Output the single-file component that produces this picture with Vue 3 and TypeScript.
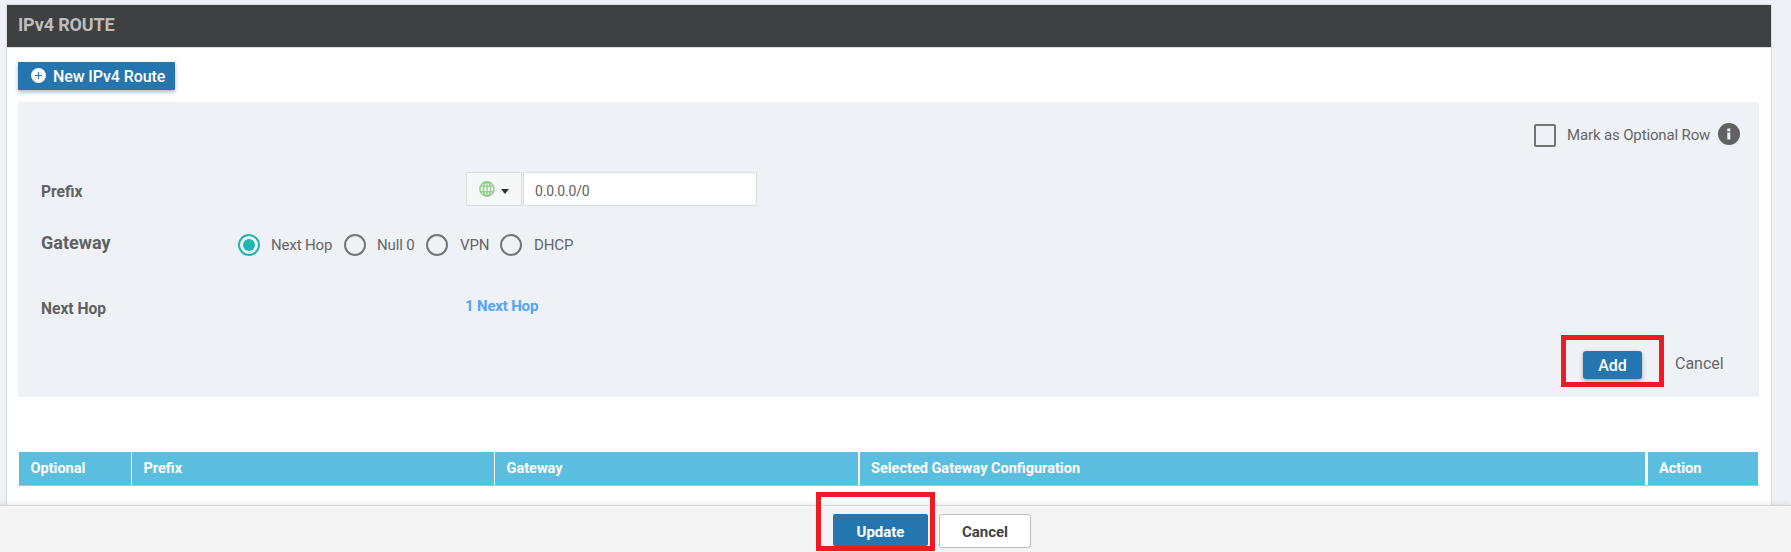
<script setup lang="ts">
import { ref } from 'vue'

interface GatewayOption {
  id: string
  label: string
}

const gateways: GatewayOption[] = [
  { id: 'hop', label: 'Next Hop' },
  { id: 'null', label: 'Null 0' },
  { id: 'vpn', label: 'VPN' },
  { id: 'dhcp', label: 'DHCP' },
]
const selected = ref('hop')
const optional = ref(false)
const prefix = ref('0.0.0.0/0')
const columns: string[] = ['Optional', 'Prefix', 'Gateway', 'Selected Gateway Configuration', 'Action']
</script>

<template>
  <div class="page">
    <section class="panel">
      <header class="panel-head"><h1>IPv4 ROUTE</h1></header>
      <div class="panel-body">
        <button class="btn new-route">
          <svg class="plus" viewBox="0 0 15 15">
            <circle cx="7.5" cy="7.5" r="7.4" fill="#fff" />
            <path d="M7.5 4v7M4 7.5h7" stroke="#2576ae" stroke-width="1.1" />
          </svg>
          <span>New IPv4 Route</span>
        </button>

        <div class="form">
          <div class="optional-row">
            <span class="check" :class="{ on: optional }" @click="optional = !optional"></span>
            <span class="optional-label">Mark as Optional Row</span>
            <svg class="info" viewBox="0 0 22 22">
              <circle cx="11" cy="11" r="11" fill="#616161" />
              <path d="M9.3 5.5h3v2.7h-3zM9.3 9.6h3v7h-3z" fill="#eef1f6" />
            </svg>
          </div>

          <div class="row prefix-row">
            <label class="name">Prefix</label>
            <button class="picker">
              <svg class="globe" viewBox="0 0 16 16" fill="none" stroke="#93d08b" stroke-width="1.6">
                <circle cx="8" cy="8" r="7.1" />
                <ellipse cx="8" cy="8" rx="3.6" ry="7.1" />
                <path d="M8 1v14M1.6 5.3h12.8M1.6 10.7h12.8" stroke-width="1.4" />
              </svg>
              <span class="caret"></span>
            </button>
            <input v-model="prefix" class="field" type="text" />
          </div>

          <div class="row gateway-row">
            <label class="name large">Gateway</label>
            <div class="radios">
              <span v-for="g in gateways" :key="g.id" class="option" :class="g.id" @click="selected = g.id">
                <i class="radio" :class="{ on: selected === g.id }"></i>
                <span>{{ g.label }}</span>
              </span>
            </div>
          </div>

          <div class="row hop-row">
            <label class="name">Next Hop</label>
            <a class="hop-link">1 Next Hop</a>
          </div>

          <div class="actions">
            <div class="mark mark-add"><button class="btn add">Add</button></div>
            <span class="cancel-text">Cancel</span>
          </div>
        </div>

        <div class="table-head">
          <div v-for="c in columns" :key="c" class="th"><span>{{ c }}</span></div>
        </div>
      </div>
    </section>

    <footer class="footer">
      <div class="mark mark-update"><button class="update">Update</button></div>
      <button class="cancel">Cancel</button>
    </footer>
  </div>
</template>

<style>
body {
  margin: 0;
  overflow: hidden;
}
</style>

<style scoped>
* {
  box-sizing: border-box;
}
.page {
  height: 552px;
  display: flex;
  flex-direction: column;
  background: #eef1f6;
  color: #666;
  font-family: Roboto, sans-serif;
  font-size: 15px;
  overflow: hidden;
}
button,
input {
  font-family: inherit;
  padding: 0;
  margin: 0;
}
.panel {
  flex: 0 0 501px;
  width: 1766px;
  margin: 4px 0 0 6px;
  border: 1px solid #dadbdd;
  border-bottom: 0;
  background: #fff;
}
.panel-head {
  height: 43px;
  padding-left: 11px;
  background: #3f4042;
  border-bottom: 1px solid #dadbdd;
}
h1 {
  margin: 0;
  font-size: 18px;
  font-weight: 700;
  letter-spacing: -0.15px;
  line-height: 39px;
  color: #bdbdbd;
}
.panel-body {
  padding: 14px 12px 0 11px;
}
.btn {
  display: flex;
  align-items: center;
  border: 0;
  height: 28px;
  background: #2576ae;
  color: #fff;
  font-size: 16px;
  font-weight: 500;
  box-shadow: 0 2px 4px rgba(0, 0, 0, 0.3);
}
.new-route {
  width: 157px;
  padding-left: 13px;
  gap: 7px;
  border-radius: 1px;
  padding-top: 1px;
}
.plus {
  width: 15px;
  height: 15px;
  margin-top: -2px;
}
.new-route span {
  white-space: nowrap;
  letter-spacing: -0.1px;
}
.form {
  height: 295px;
  margin-top: 12px;
  padding: 22px 0 0 23px;
  background: #eef1f6;
}
.optional-row {
  display: flex;
  justify-content: flex-end;
  height: 48px;
  padding-right: 19px;
}
.check {
  width: 22px;
  height: 23px;
  border: 2px solid #757575;
  border-radius: 2px;
}
.check.on {
  background: #1fb8b0;
}
.optional-label {
  width: 151px;
  margin-left: 11px;
  line-height: 22px;
  letter-spacing: -0.14px;
  white-space: nowrap;
}
.info {
  width: 22px;
  height: 22px;
  margin-top: -1px;
}
.row {
  display: flex;
}
.name {
  width: 425px;
  font-size: 15.6px;
  font-weight: 700;
  color: #616161;
}
.prefix-row {
  height: 34px;
}
.prefix-row .name {
  line-height: 40px;
}
.picker {
  display: flex;
  width: 56px;
  height: 34px;
  padding: 8px 0 0 12px;
  background: #f6f7f9;
  border: 1px solid #dadde0;
  border-radius: 2px;
}
.globe {
  width: 16px;
  height: 16px;
}
.caret {
  margin: 8px 0 0 6px;
  width: 0;
  height: 0;
  border: 4.5px solid transparent;
  border-top: 5px solid #333;
  border-bottom: 0;
}
.field {
  width: 234px;
  height: 34px;
  margin-left: 1px;
  padding: 4px 0 0 11px;
  border: 1px solid #dadde0;
  border-radius: 2px;
  background: #fff;
  color: #616161;
  font-size: 14px;
  letter-spacing: -0.2px;
  outline: 0;
}
.gateway-row {
  height: 78px;
  padding-top: 28px;
}
.name.large {
  width: 197px;
  font-size: 18px;
  line-height: 18px;
}
.radios {
  display: flex;
}
.option {
  display: flex;
  gap: 11px;
  height: 22px;
  line-height: 22px;
  letter-spacing: -0.14px;
  white-space: nowrap;
}
.option.hop {
  width: 106px;
}
.option.null {
  width: 82px;
}
.option.vpn {
  width: 74px;
}
.option.vpn,
.option.dhcp {
  gap: 12px;
}
.radio {
  flex: 0 0 22px;
  height: 22px;
  display: flex;
  align-items: center;
  justify-content: center;
  border: 2px solid #757575;
  border-radius: 50%;
}
.radio.on {
  border-color: #1fb8b0;
}
.radio.on::after {
  content: '';
  width: 12px;
  height: 12px;
  border-radius: 50%;
  background: #1fb8b0;
}
.hop-row {
  height: 51px;
  padding-top: 12px;
}
.hop-row .name {
  line-height: 26px;
}
.hop-link {
  margin-left: -1px;
  font-weight: 700;
  letter-spacing: -0.18px;
  line-height: 20px;
  color: #54a3fa;
}
.actions {
  display: flex;
  justify-content: flex-end;
}
.mark {
  border: 5px solid #ed1c24;
}
.mark-add {
  width: 103px;
  height: 52px;
  padding: 11px 0 0 17px;
}
.add {
  justify-content: center;
  width: 59px;
  border-radius: 3px;
}
.cancel-text {
  width: 95px;
  padding-left: 11px;
  font-size: 16px;
  line-height: 58px;
}
.table-head {
  display: grid;
  grid-template-columns: 112px 362px 363px 786px 109px;
  column-gap: 1px;
  height: 34px;
  margin: 55px 0 0 0;
  padding: 0 1px;
  border-bottom: 1px solid #b9bec2;
}
.th {
  padding-left: 11.5px;
  background: #5bbedf;
  color: #fff;
  font-size: 14.5px;
  font-weight: 700;
  line-height: 33px;
  white-space: nowrap;
}
.th:nth-child(4) {
  margin: 0 0 0 1px;
  padding-left: 11px;
}
.th:last-child {
  margin: 0 -3px 0 2px;
  padding-left: 11px;
}
.footer {
  display: flex;
  height: 47px;
  border-top: 1px solid #d6d6d6;
  background: #f4f4f4;
  box-shadow: 0 -2px 4px rgba(0, 0, 0, 0.07);
}
.mark-update {
  width: 119px;
  height: 59px;
  margin: -14px 4px 0 816px;
  padding: 17px 0 0 12px;
}
.update {
  display: block;
  width: 95px;
  height: 32px;
  border: 0;
  border-radius: 2px;
  background: #2576ae;
  color: #fff;
  font-size: 15px;
  font-weight: 700;
  padding-top: 3px;
}
.cancel {
  width: 92px;
  height: 34px;
  margin-top: 8px;
  border: 1px solid #bbb;
  border-radius: 3px;
  background: #fff;
  color: #424242;
  font-size: 15px;
  font-weight: 700;
  padding-top: 2px;
}
</style>
